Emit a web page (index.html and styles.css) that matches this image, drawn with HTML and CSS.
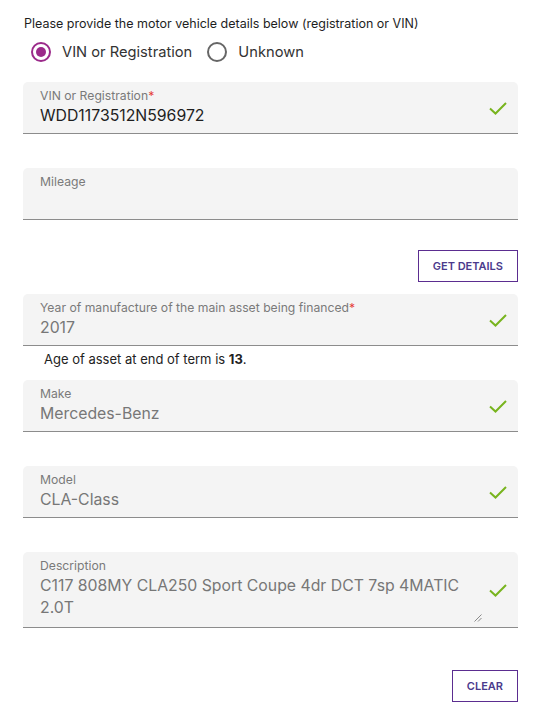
FILE: index.html
```html
<!DOCTYPE html>
<html>
<head>
<meta charset="utf-8">
<link rel="stylesheet" href="styles.css">
</head>
<body>
<div class="form">
  <p class="intro">Please provide the motor vehicle details below (registration or VIN)</p>
  <div class="radios">
    <label class="radio"><span class="dot on"></span>VIN or Registration</label>
    <label class="radio"><span class="dot"></span>Unknown</label>
  </div>

  <div class="field first">
    <div class="body">
      <div class="label">VIN or Registration<span class="req">*</span></div>
      <div class="value dark">WDD1173512N596972</div>
    </div>
    <svg class="check" width="20" height="16" viewBox="0 0 20 16"><path d="M2 8.5 L7.5 13.5 L18 3" fill="none" stroke="#78b41e" stroke-width="2"/></svg>
  </div>

  <div class="field">
    <div class="body">
      <div class="label">Mileage</div>
      <div class="value">&nbsp;</div>
    </div>
  </div>

  <div class="actions first"><button class="btn">GET DETAILS</button></div>

  <div class="field tight">
    <div class="body">
      <div class="label">Year of manufacture of the main asset being financed<span class="req">*</span></div>
      <div class="value">2017</div>
    </div>
    <svg class="check" width="20" height="16" viewBox="0 0 20 16"><path d="M2 8.5 L7.5 13.5 L18 3" fill="none" stroke="#78b41e" stroke-width="2"/></svg>
  </div>
  <p class="hint">Age of asset at end of term is <b>13</b>.</p>

  <div class="field after-hint">
    <div class="body">
      <div class="label">Make</div>
      <div class="value">Mercedes-Benz</div>
    </div>
    <svg class="check" width="20" height="16" viewBox="0 0 20 16"><path d="M2 8.5 L7.5 13.5 L18 3" fill="none" stroke="#78b41e" stroke-width="2"/></svg>
  </div>

  <div class="field">
    <div class="body">
      <div class="label">Model</div>
      <div class="value">CLA-Class</div>
    </div>
    <svg class="check" width="20" height="16" viewBox="0 0 20 16"><path d="M2 8.5 L7.5 13.5 L18 3" fill="none" stroke="#78b41e" stroke-width="2"/></svg>
  </div>

  <div class="field area">
    <div class="body">
      <div class="label">Description</div>
      <div class="value multi">C117 808MY CLA250 Sport Coupe 4dr DCT 7sp 4MATIC 2.0T</div>
      <svg class="grip" width="8" height="8" viewBox="0 0 8 8"><path d="M7.5 0.5 L0.5 7.5 M7.5 4 L4 7.5" stroke="#8a8a8a" stroke-width="1"/></svg>
    </div>
    <svg class="check" width="20" height="16" viewBox="0 0 20 16"><path d="M2 8.5 L7.5 13.5 L18 3" fill="none" stroke="#78b41e" stroke-width="2"/></svg>
  </div>

  <div class="actions last"><button class="btn">CLEAR</button></div>
</div>
</body>
</html>
```

FILE: styles.css
```css
* { box-sizing: border-box; }
body {
  margin: 0;
  background: #fff;
  font-family: "Inter", "Liberation Sans", sans-serif;
  color: #222;
}
.form {
  width: 495px;
  margin-left: 23px;
  padding-top: 16px;
}
.intro {
  margin: 0 0 0 1px;
  font-size: 12.5px;
  line-height: 16px;
  color: #1e1e1e;
}
.radios {
  display: flex;
  align-items: center;
  margin: 10px 0 0 8px;
  height: 20px;
}
.radio {
  display: flex;
  align-items: center;
  font-size: 14.7px;
  color: #333;
  margin-right: 15px;
}
.dot {
  width: 20px;
  height: 20px;
  border-radius: 50%;
  border: 2px solid #666;
  margin-right: 11px;
  position: relative;
}
.dot.on { border-color: #9b2a8a; }
.dot.on::after {
  content: "";
  position: absolute;
  left: 3px; top: 3px;
  width: 10px; height: 10px;
  border-radius: 50%;
  background: #9b2a8a;
}
.field {
  margin-top: 34px;
  display: flex;
  align-items: center;
  background: #f4f4f4;
  border-radius: 5px 5px 0 0;
  border-bottom: 1px solid #8c8c8c;
  height: 52px;
  padding: 0 10px 0 17px;
}
.field.first { margin-top: 20px; }
.field.tight { margin-top: 12px; }
.field.after-hint { margin-top: 13px; }
.field.area { height: 76px; align-items: flex-start; }
.field.area .check { margin-top: 30px; }
.body { flex: 1; position: relative; height: 100%; padding-top: 7px; }
.label {
  font-size: 12.2px;
  color: #7a7a7a;
  line-height: 14px;
}
.req { color: #e53935; }
.value {
  font-size: 15.8px;
  color: #777;
  line-height: 22px;
  margin-top: 2px;
}
.value.dark { color: #1e1e1e; }
.value.multi { padding-right: 4px; }
.grip { position: absolute; right: 6px; bottom: 5px; }
.check { flex: none; }
.hint {
  margin: 5px 0 0 21px;
  font-size: 13px;
  line-height: 16px;
  color: #222;
}
.hint b { font-weight: 700; }
.actions {
  display: flex;
  justify-content: flex-end;
}
.actions.first { margin-top: 30px; }
.actions.last { margin-top: 42px; }
.btn {
  font-family: inherit;
  background: #fff;
  border: 1.5px solid #5b2d90;
  color: #4b3a8c;
  font-weight: 600;
  font-size: 11px;
  height: 32px;
  padding: 0 14px;
}
```
